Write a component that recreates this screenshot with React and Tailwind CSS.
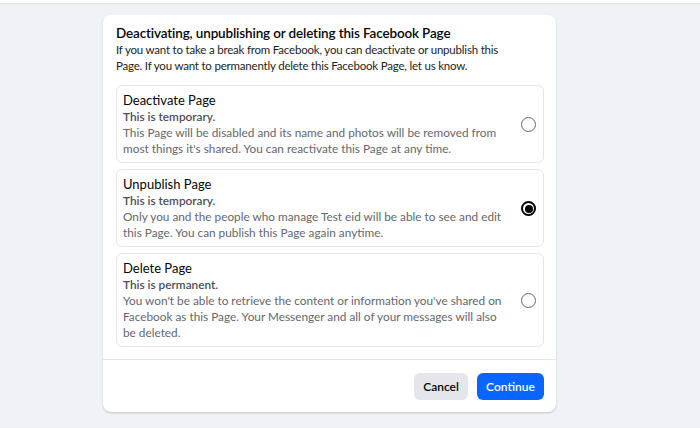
import React from "react";

const options = [
  {
    title: "Deactivate Page",
    sub: "This is temporary.",
    desc: [
      "This Page will be disabled and its name and photos will be removed from",
      "most things it's shared. You can reactivate this Page at any time.",
    ],
    checked: false,
  },
  {
    title: "Unpublish Page",
    sub: "This is temporary.",
    desc: [
      "Only you and the people who manage Test eid will be able to see and edit",
      "this Page. You can publish this Page again anytime.",
    ],
    checked: true,
  },
  {
    title: "Delete Page",
    sub: "This is permanent.",
    desc: [
      "You won't be able to retrieve the content or information you've shared on",
      "Facebook as this Page. Your Messenger and all of your messages will also",
      "be deleted.",
    ],
    checked: false,
  },
];

function Radio({ checked }) {
  return checked ? (
    <div className="w-[15px] h-[15px] rounded-full border-[2px] border-black flex items-center justify-center">
      <div className="w-[8px] h-[8px] rounded-full bg-black" />
    </div>
  ) : (
    <div className="w-[15px] h-[15px] rounded-full border-[1.5px] border-[#606770]" />
  );
}

export default function App() {
  return (
    <div
      className="w-[700px] h-[428px] bg-[#f0f2f5] overflow-hidden"
      style={{ fontFamily: 'Lato, "Liberation Sans", sans-serif' }}
    >
      <div className="h-[3px] bg-white shadow-[0_1px_2px_rgba(0,0,0,0.06)]" />
      <div className="pl-[103px] pt-[12px]">
        <div className="w-[453px] bg-white rounded-[8px] shadow-[0_1px_2px_rgba(0,0,0,0.2)]">
          <div className="pl-[13px] pr-[12px] pt-[9px]">
            <div className="text-[13.5px] leading-[18px] font-semibold text-[#050505] tracking-[-0.15px] whitespace-nowrap">
              Deactivating, unpublishing or deleting this Facebook Page
            </div>
            <div className="text-[11.5px] leading-[16px] text-[#1c1e21] tracking-[-0.2px] whitespace-nowrap">
              <div>If you want to take a break from Facebook, you can deactivate or unpublish this</div>
              <div>Page. If you want to permanently delete this Facebook Page, let us know.</div>
            </div>
          </div>
          <div className="pl-[13px] pr-[12px] pt-[11px] flex flex-col gap-[6px]">
            {options.map((o) => (
              <div
                key={o.title}
                className="border border-[#e4e6eb] rounded-[6px] pl-[6px] pr-[7px] pt-[6px] pb-[5px] flex items-center"
              >
                <div className="flex-1 whitespace-nowrap">
                  <div className="text-[13px] leading-[16px] text-[#050505]">{o.title}</div>
                  <div className="text-[11.8px] leading-[17px] font-semibold text-[#4b4f56]">{o.sub}</div>
                  <div className="text-[11.8px] leading-[16px] text-[#65676b]">
                    {o.desc.map((l) => (
                      <div key={l}>{l}</div>
                    ))}
                  </div>
                </div>
                <Radio checked={o.checked} />
              </div>
            ))}
          </div>
          <div className="mt-[12px] border-t border-[#e4e6eb] pr-[12px] pt-[13px] pb-[12px] flex justify-end gap-[9px]">
            <button className="h-[27px] w-[54px] rounded-[6px] bg-[#e4e6eb] text-[12px] font-semibold text-[#050505]">
              Cancel
            </button>
            <button className="h-[27px] w-[67px] rounded-[6px] bg-[#0866ff] text-[12px] font-semibold text-white">
              Continue
            </button>
          </div>
        </div>
      </div>
    </div>
  );
}
